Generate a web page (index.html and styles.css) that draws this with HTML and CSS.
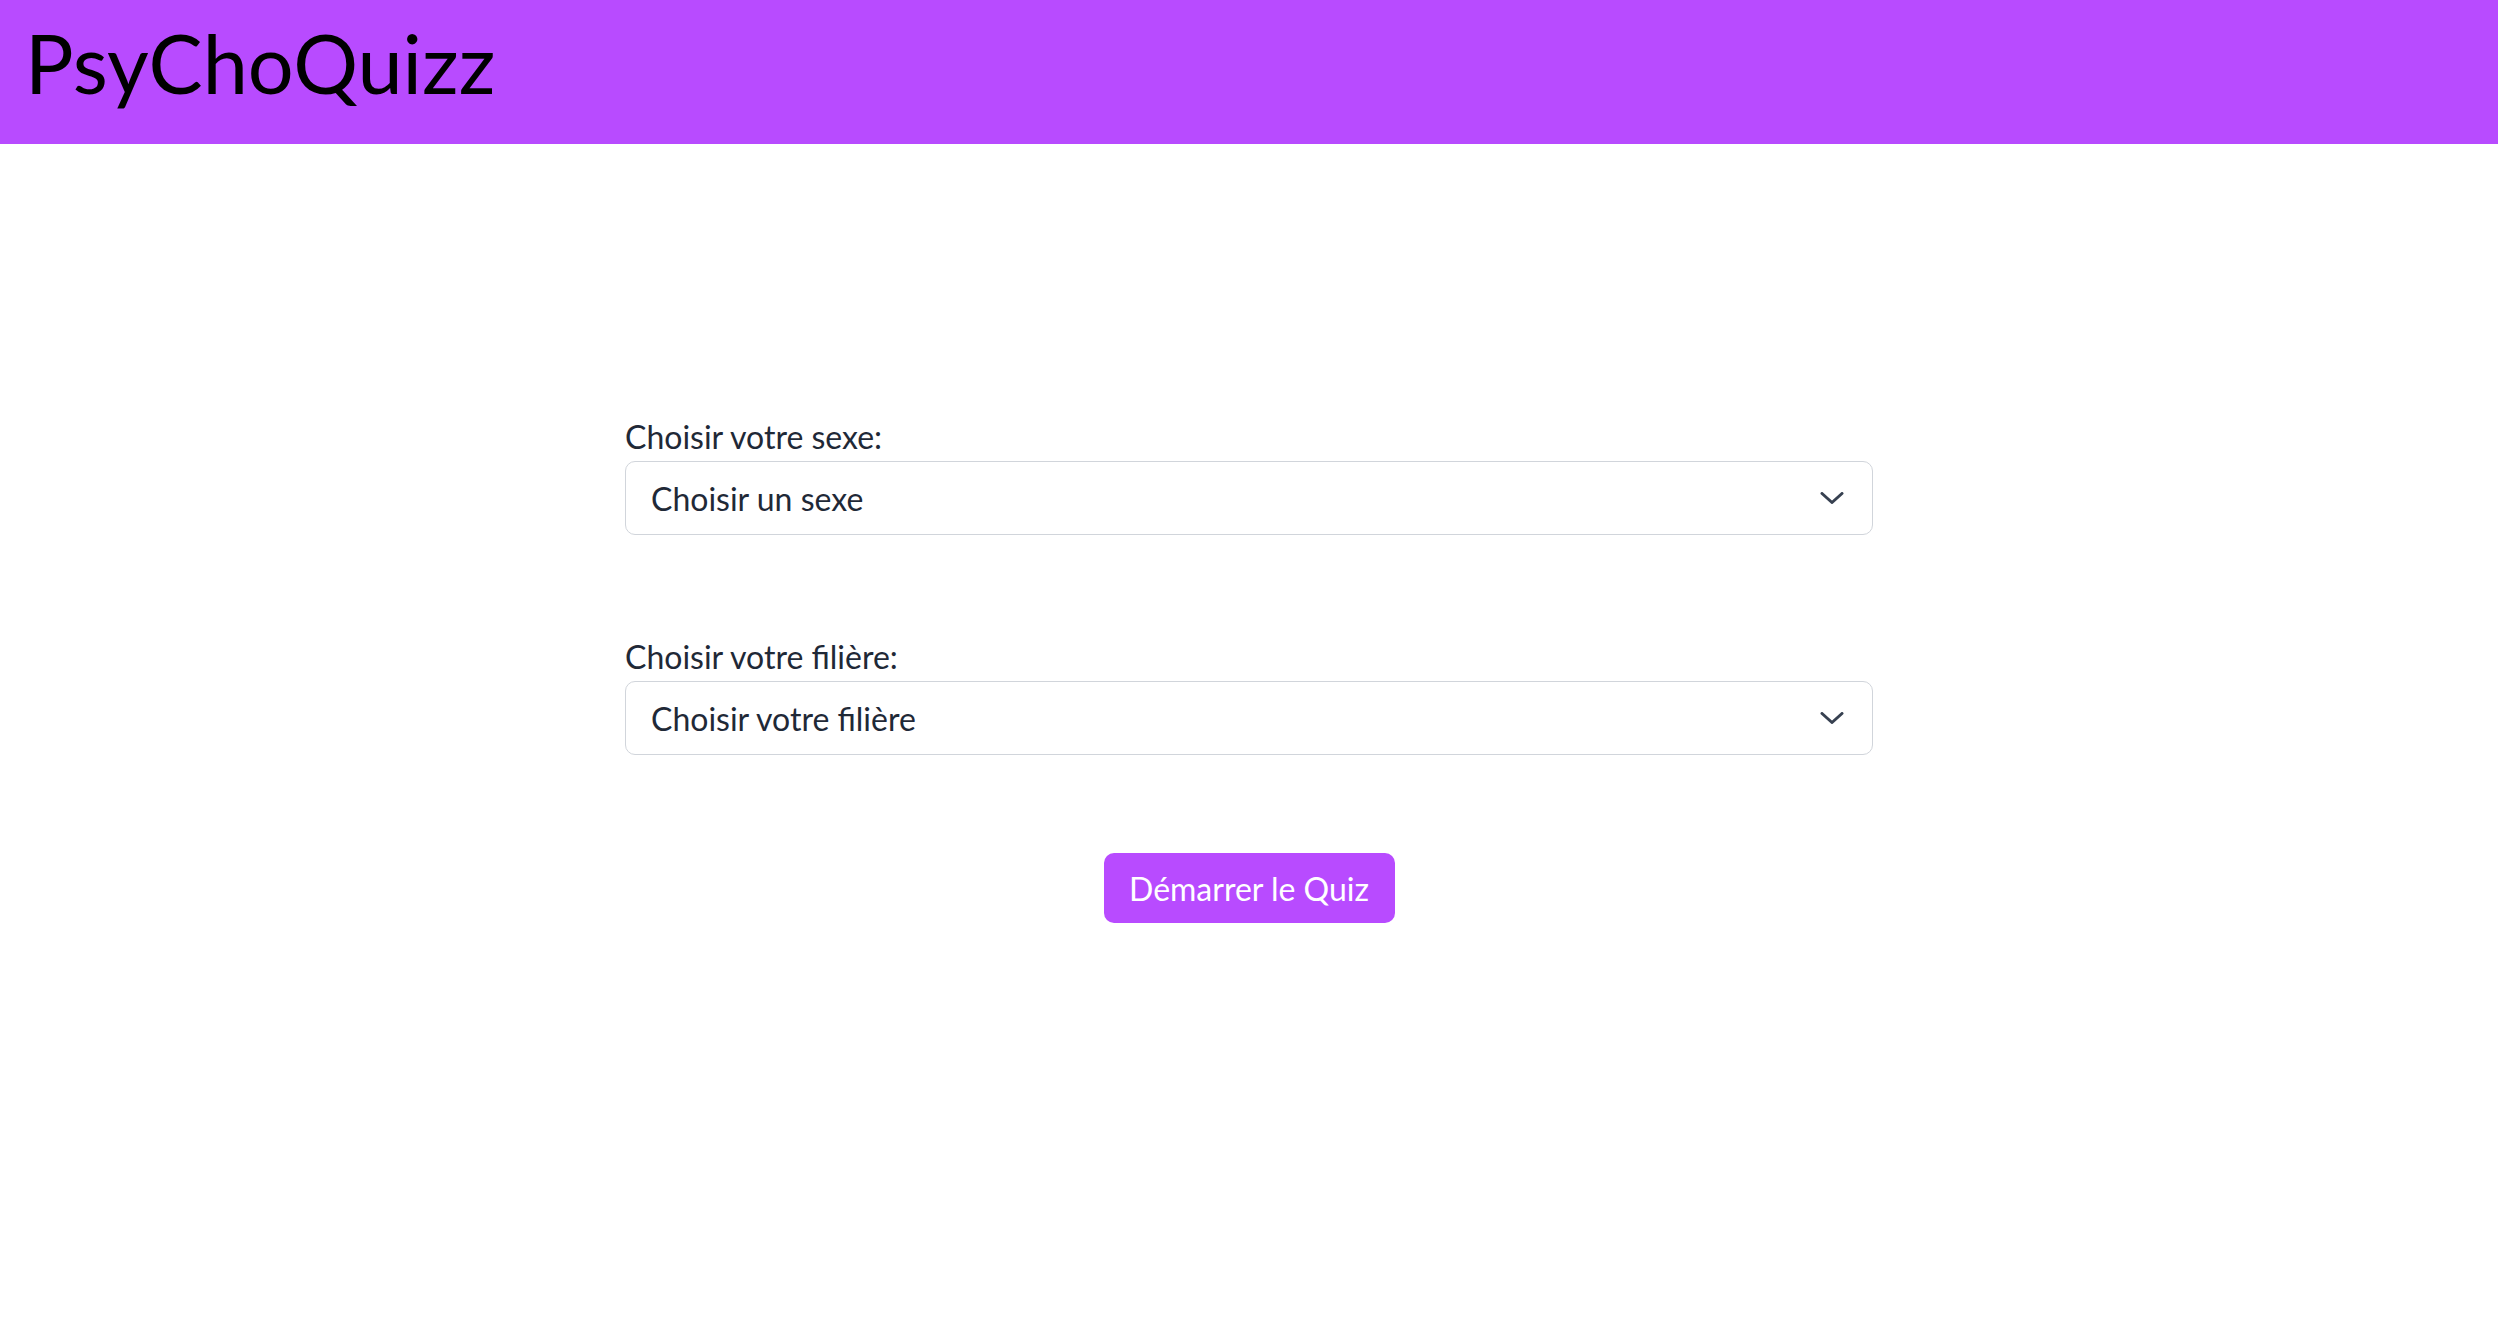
FILE: index.html
```html
<!DOCTYPE html>
<html lang="fr">
<head>
<meta charset="utf-8">
<title>PsyChoQuizz</title>
<link rel="stylesheet" href="styles.css">
</head>
<body>
<header class="topbar">
  <h1 class="brand">PsyChoQuizz</h1>
</header>
<main class="main">
  <form class="quiz-form">
    <div class="field">
      <label class="field-label" for="sexe">Choisir votre sexe:</label>
      <div class="select-wrap">
        <select id="sexe" class="select">
          <option>Choisir un sexe</option>
        </select>
        <svg class="chevron" viewBox="0 0 24 12" width="24" height="12" aria-hidden="true"><path d="M2 1.5 L12 10.5 L22 1.5" fill="none" stroke="#374151" stroke-width="3" stroke-linecap="round" stroke-linejoin="round"/></svg>
      </div>
    </div>
    <div class="field">
      <label class="field-label" for="filiere">Choisir votre filière:</label>
      <div class="select-wrap">
        <select id="filiere" class="select">
          <option>Choisir votre filière</option>
        </select>
        <svg class="chevron" viewBox="0 0 24 12" width="24" height="12" aria-hidden="true"><path d="M2 1.5 L12 10.5 L22 1.5" fill="none" stroke="#374151" stroke-width="3" stroke-linecap="round" stroke-linejoin="round"/></svg>
      </div>
    </div>
    <div class="actions">
      <button type="button" class="start-btn">Démarrer le Quiz</button>
    </div>
  </form>
</main>
</body>
</html>
```

FILE: styles.css
```css
* { box-sizing: border-box; }

html, body {
  margin: 0;
  padding: 0;
  background: #ffffff;
  font-family: Lato, "Open Sans", sans-serif;
}

.topbar {
  height: 144px;
  background: #b84bff;
  padding: 15px 25px 0;
}

.brand {
  margin: 0;
  font-family: Lato, sans-serif;
  font-weight: 400;
  font-size: 81px;
  line-height: 96px;
  color: #000000;
}

.main {
  padding-top: 269px;
}

.quiz-form {
  width: 1248px;
  margin: 0 auto;
  display: flex;
  flex-direction: column;
  gap: 98px;
}

.field {
  display: flex;
  flex-direction: column;
}

.field-label {
  font-size: 32px;
  line-height: 48px;
  color: #1f2937;
}

.select-wrap {
  position: relative;
}

.select {
  appearance: none;
  -webkit-appearance: none;
  width: 100%;
  height: 74px;
  padding: 0 60px 0 25px;
  border: 1.5px solid #d1d5db;
  border-radius: 10px;
  background: #ffffff;
  font-family: Lato, sans-serif;
  font-size: 32px;
  color: #1f2937;
  outline: none;
}

.chevron {
  position: absolute;
  right: 29px;
  top: 31px;
  pointer-events: none;
}

.actions {
  display: flex;
  justify-content: center;
}

.start-btn {
  height: 70px;
  width: 291px;
  border: none;
  border-radius: 10px;
  background: #b84bff;
  color: #ffffff;
  font-family: Lato, sans-serif;
  font-size: 32px;
  padding: 0;
  cursor: pointer;
}
```
